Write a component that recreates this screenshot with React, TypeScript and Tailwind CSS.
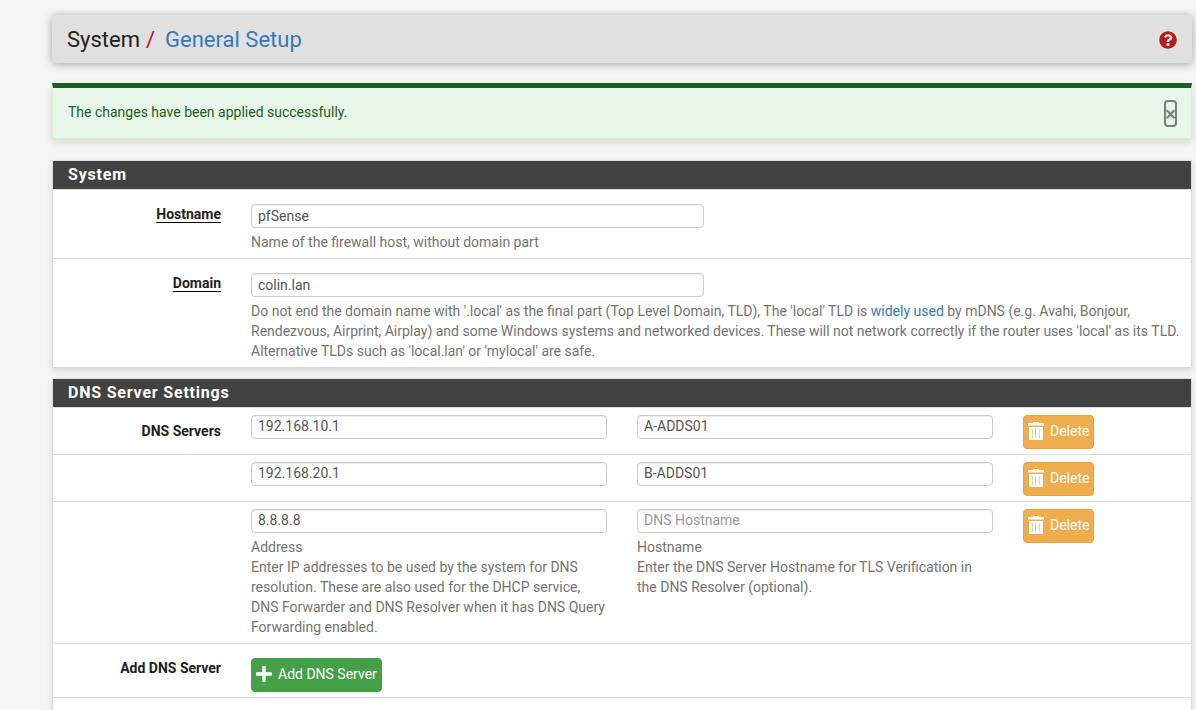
import type { ReactNode } from "react";
import { FaQuestionCircle } from "react-icons/fa";

const servers = [
    { address: "192.168.10.1", hostname: "A-ADDS01" },
    { address: "192.168.20.1", hostname: "B-ADDS01" },
    { address: "8.8.8.8", hostname: "" },
];

const inputClass =
    "block w-full h-6 px-1.5 bg-white border border-[#ccc] rounded text-sm text-[#555] placeholder:text-[#999] shadow-[inset_0_1px_1px_rgba(0,0,0,0.075)]";

function TrashIcon() {
    return (
        <svg width="16" height="18" viewBox="0 0 16 18" fill="currentColor" aria-hidden="true">
            <path d="M5 0.5Q5 0 5.5 0h5q0.5 0 0.5 0.5V1h4.4q0.6 0 0.6 0.6V3q0 0.6-0.6 0.6H0.6Q0 3.6 0 3V1.6Q0 1 0.6 1H5zM1 5h14v12q0 1-1 1H2q-1 0-1-1z" />
            <path d="M4 7h1v9H4zM7 7h1v9H7zM11 7h1v9h-1z" fill="#f0ad4e" fillOpacity="0.6" />
        </svg>
    );
}

function PlusIcon() {
    return (
        <svg width="16" height="16" viewBox="0 0 16 16" fill="currentColor" aria-hidden="true">
            <path d="M7 0h2q0.7 0 0.7 0.7V6.3h5.6q0.7 0 0.7 0.7v2q0 0.7-0.7 0.7H9.7v5.6q0 0.7-0.7 0.7H7q-0.7 0-0.7-0.7V9.7H0.7Q0 9.7 0 9V7q0-0.7 0.7-0.7h5.6V0.7Q6.3 0 7 0z" />
        </svg>
    );
}

function Panel({ title, children }: { title: string; children: ReactNode }) {
    return (
        <section className="mb-2.5 bg-white border border-[#ddd] overflow-hidden shadow-[0_3px_6px_rgba(0,0,0,0.12)]">
            <h2 className="h-7 px-[15px] bg-[#424242] text-white text-base leading-7 font-bold tracking-wider">{title}</h2>
            <div className="border-t border-[#ddd] divide-y divide-[#ddd]">{children}</div>
        </section>
    );
}

function Row({ className, children }: { className: string; children: ReactNode }) {
    return <div className={`grid grid-cols-12 items-start -mx-2.5 ${className}`}>{children}</div>;
}

function DeleteButton() {
    return (
        <button
            type="button"
            className="flex items-center gap-1.5 h-[34px] px-1 pb-0.5 bg-[#f0ad4e] border border-[#eea236] rounded text-sm text-white"
        >
            <TrashIcon />
            Delete
        </button>
    );
}

export default function App() {
    return (
        <div className="min-h-screen bg-[#f5f5f5] pl-[52px] pr-1 pt-[15px] font-[Roboto,sans-serif] text-sm leading-5 text-[#212121]">
            <header className="flex items-center justify-between h-12 px-[15px] pt-0.5 mb-5 bg-[#e0e0e0] rounded-sm shadow-[0_1px_8px_rgba(0,0,0,0.35)]">
                <h1 className="flex text-[22px] leading-6">
                    System
                    <span className="ml-1.5 mr-2.5 text-[#c00f1c]">/</span>
                    <a href="#general" className="text-[#337ab7]">General Setup</a>
                </h1>
                <a href="#help" aria-label="Help" className="text-[#b71c1c]">
                    <FaQuestionCircle size={18} />
                </a>
            </header>

            <div
                role="alert"
                className="flex items-start justify-between mb-[21px] pl-[15px] pr-3.5 border border-t-5 border-[#dcedc8] border-t-[#1b5e20] bg-[#e8f5e9] text-[#1b5e20] shadow-[0_3px_8px_rgba(0,0,0,0.12)]"
            >
                <p className="pt-3.5 pb-4">The changes have been applied successfully.</p>
                <button
                    type="button"
                    aria-label="Close"
                    className="mt-3 w-[13px] h-[27px] flex items-center justify-center border-2 border-[#77807a] rounded text-xl leading-none font-medium text-[#77807a]"
                >
                    ×
                </button>
            </div>

            <Panel title="System">
                <Row className="pt-3.5 pb-1.5">
                    <label htmlFor="hostname" className="col-span-2 pr-[15px] text-right font-bold">
                        <span className="underline decoration-black underline-offset-3">Hostname</span>
                    </label>
                    <div className="col-span-10 px-[15px]">
                        <div className="max-w-[453px]">
                            <input id="hostname" type="text" defaultValue="pfSense" className={inputClass} />
                        </div>
                        <p className="mt-1 text-[#737373]">Name of the firewall host, without domain part</p>
                    </div>
                </Row>
                <Row className="pt-3.5 pb-1.5">
                    <label htmlFor="domain" className="col-span-2 pr-[15px] text-right font-bold">
                        <span className="underline decoration-black underline-offset-3">Domain</span>
                    </label>
                    <div className="col-span-10 px-[15px]">
                        <div className="max-w-[453px]">
                            <input id="domain" type="text" defaultValue="colin.lan" className={inputClass} />
                        </div>
                        <p className="mt-1 text-[#737373]">
                            Do not end the domain name with '.local' as the final part (Top Level Domain, TLD), The 'local' TLD is{" "}
                            <a href="#mdns" className="text-[#337ab7]">widely used</a> by mDNS (e.g. Avahi, Bonjour, Rendezvous, Airprint,
                            Airplay) and some Windows systems and networked devices. These will not network correctly if the router uses
                            'local' as its TLD. Alternative TLDs such as 'local.lan' or 'mylocal' are safe.
                        </p>
                    </div>
                </Row>
            </Panel>

            <Panel title="DNS Server Settings">
                {servers.map((server, i) => {
                    const last = i === servers.length - 1;
                    return (
                        <Row key={server.address} className={last ? "pt-[7px] pb-1.5" : "pt-[7px] pb-[5px]"}>
                            <div className="col-span-2 pt-1.5 pr-[15px] text-right font-bold">{i === 0 && "DNS Servers"}</div>
                            <div className="col-span-4 px-[15px]">
                                <input type="text" aria-label="Address" defaultValue={server.address} className={`${inputClass} pb-0.5`} />
                                {last && (
                                    <p className="mt-1 text-[#737373]">
                                        Address
                                        <br />
                                        Enter IP addresses to be used by the system for DNS resolution. These are also used for the DHCP
                                        service, DNS Forwarder and DNS Resolver when it has DNS Query Forwarding enabled.
                                    </p>
                                )}
                            </div>
                            <div className="col-span-4 px-[15px]">
                                <input
                                    type="text"
                                    aria-label="Hostname"
                                    placeholder="DNS Hostname"
                                    defaultValue={server.hostname}
                                    className={`${inputClass} pb-0.5`}
                                />
                                {last && (
                                    <p className="mt-1 text-[#737373]">
                                        Hostname
                                        <br />
                                        Enter the DNS Server Hostname for TLS Verification in the DNS Resolver (optional).
                                    </p>
                                )}
                            </div>
                            <div className="col-span-2 px-[15px]">
                                <DeleteButton />
                            </div>
                        </Row>
                    );
                })}
                <Row className="pt-3.5 pb-[5px]">
                    <div className="col-span-2 pr-[15px] text-right font-bold">Add DNS Server</div>
                    <div className="col-span-10 px-[15px]">
                        <button
                            type="button"
                            className="flex items-center gap-1.5 h-[34px] px-1 pb-0.5 bg-[#43a047] border border-[#43a047] rounded text-sm text-white"
                        >
                            <PlusIcon />
                            Add DNS Server
                        </button>
                    </div>
                </Row>
                <div className="h-3" />
            </Panel>
        </div>
    );
}
